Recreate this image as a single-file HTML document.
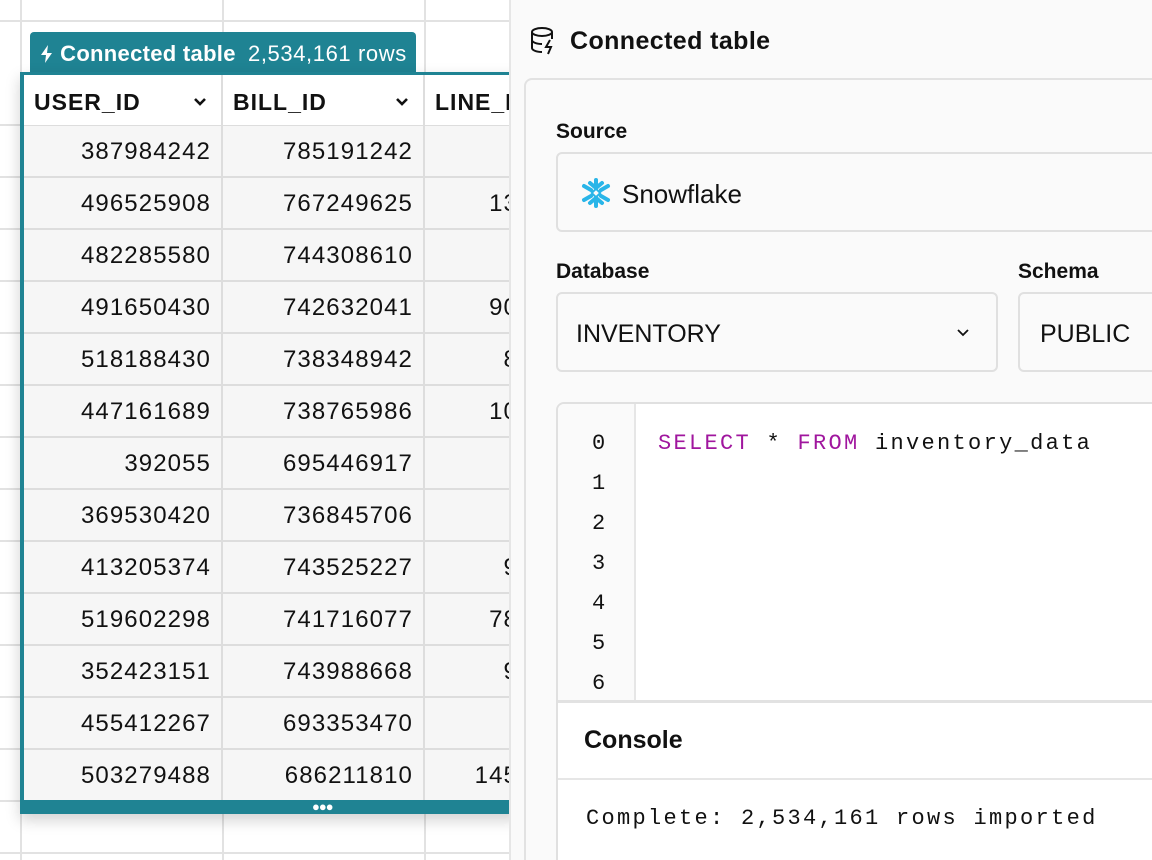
<!DOCTYPE html>
<html><head><style>
*{margin:0;padding:0;box-sizing:border-box}
html{width:1152px;height:860px;overflow:hidden}
body{width:1152px;height:860px;overflow:hidden;background:#fff;font-family:"Liberation Sans",sans-serif;position:relative;color:#111}
.a{position:absolute}
.vl{position:absolute;top:0;width:2px;height:860px;background:#e2e2e2}
.hl{position:absolute;left:0;height:2px;width:510px;background:#e2e2e2}
.cell{position:absolute;height:52px;border-right:2px solid #ddd;border-bottom:2px solid #ddd;background:#f6f6f6;font-size:24px;letter-spacing:1.1px;text-align:right;padding-right:10px;line-height:52px}
.hd{position:absolute;height:52px;background:#fff;border-right:2px solid #ddd;border-bottom:2px solid #ddd;font-size:23px;letter-spacing:1px;font-weight:bold;line-height:54px;padding-left:10px}
.lbl{position:absolute;font-size:21px;font-weight:bold}
.box{position:absolute;border:2px solid #e0e0e0;border-radius:6px;background:#fafafa;font-size:25px}
.mono{font-family:"Liberation Mono",monospace;font-size:22px;letter-spacing:2.3px}
</style></head><body>
<div class="vl" style="left:20px"></div><div class="vl" style="left:222px"></div><div class="vl" style="left:424px"></div>
<div class="hl" style="top:20px"></div><div class="hl" style="top:124px"></div><div class="hl" style="top:176px"></div>
<div class="hl" style="top:228px"></div><div class="hl" style="top:280px"></div><div class="hl" style="top:332px"></div><div class="hl" style="top:384px"></div><div class="hl" style="top:436px"></div><div class="hl" style="top:488px"></div><div class="hl" style="top:540px"></div><div class="hl" style="top:592px"></div><div class="hl" style="top:644px"></div><div class="hl" style="top:696px"></div><div class="hl" style="top:748px"></div><div class="hl" style="top:800px"></div><div class="hl" style="top:852px"></div>

<div class="a" style="left:30px;top:32px;width:386px;height:42px;background:#1f8393;border-radius:4px 4px 0 0;color:#fff;font-size:22px;line-height:44px;padding-left:10px;white-space:nowrap"><svg width="14" height="18" viewBox="0 0 14 18" style="vertical-align:-2px"><path d="M8 0L1 10h5l-1 8 7-10H7z" fill="#fff"/></svg> <b style="letter-spacing:0.3px">Connected table</b>&nbsp; <span style="letter-spacing:0.6px">2,534,161 rows</span></div>
<div class="a" style="left:20px;top:72px;width:500px;height:742px;background:#1f8393;box-shadow:0 6px 14px rgba(0,0,0,.18)"></div>
<div class="a" style="left:24px;top:75px;width:490px;height:725px;background:#fff;overflow:hidden" id="t">
<div class="hd" style="left:0;top:0;width:199px">USER_ID<svg style="position:absolute;right:14px;top:22px" width="14" height="10" viewBox="0 0 14 10"><path d="M2 2l5 5 5-5" stroke="#111" stroke-width="2.6" fill="none"/></svg></div>
<div class="hd" style="left:199px;top:0;width:202px">BILL_ID<svg style="position:absolute;right:14px;top:22px" width="14" height="10" viewBox="0 0 14 10"><path d="M2 2l5 5 5-5" stroke="#111" stroke-width="2.6" fill="none"/></svg></div>
<div class="hd" style="left:401px;top:0;width:140px">LINE_ITEM</div>
</div>
<div class="a" style="left:312px;top:801px;font-size:13px;color:#fff;letter-spacing:-1px;line-height:12px">&#9679;&#9679;&#9679;</div>

<div class="a" style="left:509px;top:0;width:643px;height:860px;background:#fafafa;border-left:2px solid #e6e6e6;overflow:hidden">
<div class="a" style="left:13px;top:78px;width:640px;height:800px;border:2px solid #e2e2e2;border-radius:8px;background:#fafafa"></div>
</div>
<svg class="a" style="left:530px;top:26px" width="28" height="30" viewBox="0 0 28 30" fill="none" stroke="#111" stroke-width="2"><ellipse cx="12" cy="6" rx="10" ry="4"/><path d="M2 6v16c0 2 4 4 10 4M22 6v7M2 14c0 2 4 4 10 4M20 14l-4 7h5l-3 7"/></svg>
<div class="a" style="left:570px;top:27px;font-size:25px;letter-spacing:0.4px;font-weight:bold">Connected table</div>
<div class="lbl" style="left:556px;top:120px">Source</div>
<div class="box" style="left:556px;top:152px;width:610px;height:80px;line-height:80px;padding-left:64px;font-size:26px">Snowflake</div>
<svg class="a" style="left:580px;top:177px" width="32" height="32" viewBox="0 0 32 32" stroke="#29b5e8" stroke-width="4" stroke-linecap="round" fill="none"><path d="M16 3v8M16 21v8M10 6l6 5 6-5M10 26l6-5 6 5M4 9l7 4M21 19l7 4M28 9l-7 4M11 19l-7 4"/><rect x="13" y="13" width="6" height="6" transform="rotate(45 16 16)" stroke-width="2"/></svg>
<div class="lbl" style="left:556px;top:260px">Database</div>
<div class="lbl" style="left:1018px;top:260px">Schema</div>
<div class="box" style="left:556px;top:292px;width:442px;height:80px;line-height:80px;padding-left:18px">INVENTORY<svg style="position:absolute;right:26px;top:34px" width="14" height="10" viewBox="0 0 14 10"><path d="M2 2l5 5 5-5" stroke="#111" stroke-width="1.8" fill="none"/></svg></div>
<div class="box" style="left:1018px;top:292px;width:150px;height:80px;line-height:80px;padding-left:20px">PUBLIC</div>
<div class="a" style="left:556px;top:402px;width:610px;height:470px;border:2px solid #e0e0e0;border-radius:8px;background:#fff;overflow:hidden">
<div class="a" style="left:0;top:0;width:78px;height:470px;background:#fafafa;border-right:2px solid #e6e6e6"></div>
<div class="a mono" style="left:34px;top:20px;line-height:40px">0<br>1<br>2<br>3<br>4<br>5<br>6</div>
<div class="a mono" style="left:100px;top:20px;line-height:40px"><span style="color:#a0169e">SELECT</span> * <span style="color:#a0169e">FROM</span> inventory_data</div>
<div class="a" style="left:0;top:296px;width:610px;height:200px;background:#fff;border-top:3px solid #e2e2e2"></div>
<div class="a" style="left:26px;top:322px;font-size:25px;font-weight:bold">Console</div>
<div class="a" style="left:0;top:374px;width:610px;height:2px;background:#e6e6e6"></div>
<div class="a mono" style="left:28px;top:402px">Complete: 2,534,161 rows imported</div>
</div>

<script>
var d=[["387984242","785191242",""],["496525908","767249625","13"],["482285580","744308610",""],["491650430","742632041","90"],["518188430","738348942","8"],["447161689","738765986","10"],["392055","695446917",""],["369530420","736845706",""],["413205374","743525227","9"],["519602298","741716077","78"],["352423151","743988668","9"],["455412267","693353470",""],["503279488","686211810","145"]];
var t=document.getElementById('t'),h='';
d.forEach(function(r,i){var y=51+i*52;
h+='<div class="cell" style="left:0;top:'+y+'px;width:199px">'+r[0]+'</div>';
h+='<div class="cell" style="left:199px;top:'+y+'px;width:202px">'+r[1]+'</div>';
h+='<div class="cell" style="left:401px;top:'+y+'px;width:103px;border-right:0">'+r[2]+'</div>';});
t.innerHTML+=h;
</script>
</body></html>
